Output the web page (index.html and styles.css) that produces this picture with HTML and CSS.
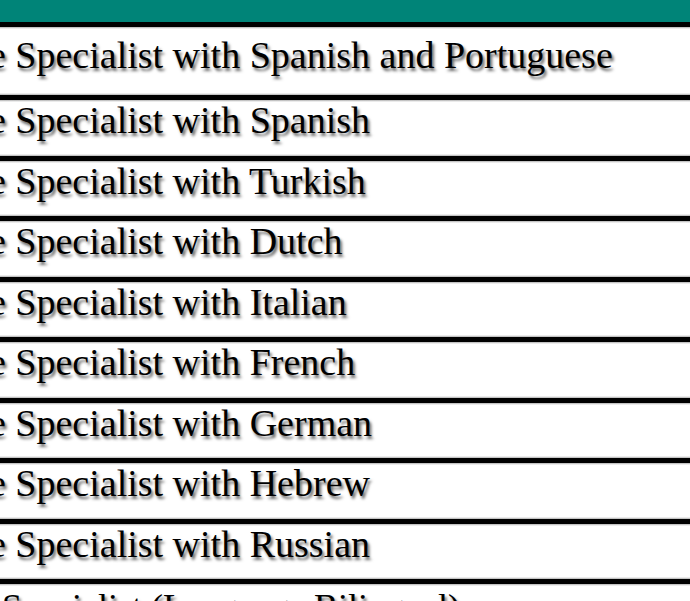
FILE: index.html
```html
<!DOCTYPE html>
<html>
<head>
<meta charset="utf-8">
<link rel="stylesheet" href="styles.css">
</head>
<body>
<div class="table">
  <div class="head"></div>
  <div class="row first"><span class="cell">e Specialist with Spanish and Portuguese</span></div>
  <div class="row"><span class="cell">e Specialist with Spanish</span></div>
  <div class="row"><span class="cell">e Specialist with Turkish</span></div>
  <div class="row"><span class="cell">e Specialist with Dutch</span></div>
  <div class="row"><span class="cell">e Specialist with Italian</span></div>
  <div class="row"><span class="cell">e Specialist with French</span></div>
  <div class="row"><span class="cell">e Specialist with German</span></div>
  <div class="row"><span class="cell">e Specialist with Hebrew</span></div>
  <div class="row"><span class="cell">e Specialist with Russian</span></div>
  <div class="row last"><span class="cell alt">Specialist (Language Bilingual)</span></div>
</div>
</body>
</html>
```
FILE: styles.css
```css
html, body {
  margin: 0;
  padding: 0;
  background: #fff;
  overflow: hidden;
  height: 601px;
}
.table {
  width: 760px;
  display: flex;
  flex-direction: column;
  font-family: "Liberation Serif", "Times New Roman", serif;
  font-size: 38px;
  line-height: 38px;
  color: #000;
}
.head {
  height: 22px;
  background: #008478;
  flex: none;
}
.row {
  flex: none;
  height: 54.5px;
  border-top: 5px solid #000;
  padding-top: 1px;
  box-sizing: content-box;
  background: linear-gradient(to bottom, #b0b0b0 0, #fff 2px, #fff calc(100% - 2px), #b0b0b0 100%);
  white-space: nowrap;
  overflow: hidden;
}
.row.first {
  height: 59px;
  padding-top: 9px;
}
.row.last {
  padding-top: 4px;
}
.cell {
  display: block;
  margin-left: -11px;
  text-shadow: 2px 3px 3px rgba(0, 0, 0, 0.6);
}
.cell.alt {
  margin-left: 2px;
  font-size: 36px;
}
```
